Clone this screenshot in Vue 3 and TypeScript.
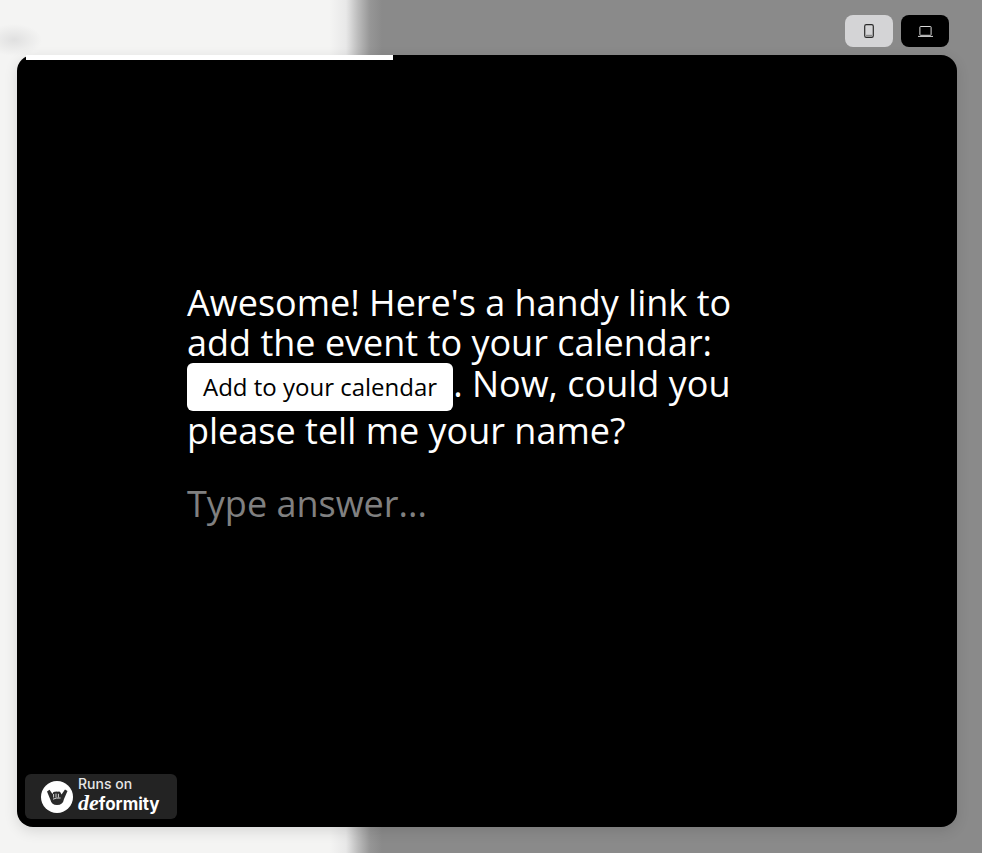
<template>
  <div class="page">
    <header class="toolbar">
      <button class="device device-light" aria-label="Mobile view">
        <svg width="10" height="14" viewBox="0 0 10 14" fill="none">
          <rect x="0.7" y="0.7" width="8.6" height="12.6" rx="1.6" stroke="#2a2a2a" stroke-width="1.2" />
          <path d="M2 10.8h6v1.6H2z" fill="#8a8a8a" />
        </svg>
      </button>
      <button class="device device-dark" aria-label="Desktop view">
        <svg width="15" height="11" viewBox="0 0 15 11" fill="none">
          <rect x="1.9" y="0.5" width="11.2" height="8.8" rx="0.6" stroke="#d8d8d8" stroke-width="1" />
          <path d="M0 10.4h15" stroke="#d8d8d8" stroke-width="1" />
        </svg>
      </button>
    </header>

    <main class="card">
      <div class="progress"></div>

      <div class="question">
        <p class="prompt">
          Awesome! Here's a handy link to add the event to your calendar:
          <a class="cta">Add to your calendar</a><span>. Now, could you please tell me your name?</span>
        </p>
        <p class="placeholder">Type answer...</p>
      </div>

      <a class="badge">
        <span class="badge-logo">
          <svg width="32" height="32" viewBox="0 0 32 32">
            <path d="M6 10.5 8.5 8.8 11.5 13Q12 10.5 14 10.8 15.5 10 17 10.8 18.5 10.2 19.5 11.5L20.5 13.5 24 8.5 26.5 10 23 18Q22 24 16 24 10.5 24 9.5 19Z" fill="#2b2b2b" />
            <path d="M12.6 16.5V13M15 16.5V12.6M17.4 16.5V12.8M12 18.2Q15 16.6 19.6 17" stroke="#fff" stroke-width="0.8" fill="none" />
          </svg>
        </span>
        <span class="badge-text">
          <span class="runs">Runs on</span>
          <span class="brand"><i>de</i>formity</span>
        </span>
      </a>
    </main>
  </div>
</template>

<script setup lang="ts">
</script>

<style>
html,
body {
  margin: 0;
}
</style>

<style scoped>
.page {
  width: 982px;
  height: 853px;
  box-sizing: border-box;
  padding: 15px 25px 26px 17px;
  display: flex;
  flex-direction: column;
  overflow: hidden;
  background:
    radial-gradient(ellipse 28px 16px at 14px 40px, #e0e0e0 0, rgba(224, 224, 224, 0) 100%),
    linear-gradient(90deg, #f4f4f3 0, #f4f4f3 330px, #e8e8e8 346px, #bcbcbc 358px, #969696 370px, #8a8a8a 382px, #8a8a8a 100%);
}

.toolbar {
  display: flex;
  justify-content: flex-end;
  gap: 8px;
  height: 40px;
  padding-right: 8px;
  box-sizing: border-box;
  padding-bottom: 8px;
}

.device {
  width: 48px;
  height: 32px;
  border: 0;
  padding: 0;
  border-radius: 8px;
  display: flex;
  align-items: center;
  justify-content: center;
}

.device-light {
  background: #d4d4d6;
}

.device-dark {
  background: #000;
}

.card {
  position: relative;
  flex: 1;
  background: #000;
  border-radius: 16px;
  display: flex;
  align-items: center;
  padding: 0 0 76px 170px;
  box-shadow: 0 4px 14px rgba(0, 0, 0, 0.12);
}

.progress {
  position: absolute;
  top: 0;
  left: 9px;
  width: 367px;
  height: 5px;
  background: #fff;
}

.question {
  width: 560px;
  font-family: "Open Sans", "Noto Sans", sans-serif;
  color: #fff;
}

.prompt {
  margin: 0;
  font-size: 36px;
  line-height: 40px;
}

.cta {
  display: inline-block;
  background: #fff;
  color: #000;
  font-size: 24px;
  line-height: 30px;
  padding: 9px 16px;
  border-radius: 6px;
  vertical-align: middle;
}

.placeholder {
  margin: 33px 0 0;
  font-size: 36px;
  line-height: 40px;
  color: #808080;
}

.badge {
  position: absolute;
  left: 8px;
  bottom: 8px;
  width: 152px;
  height: 45px;
  box-sizing: border-box;
  padding-left: 16px;
  display: flex;
  align-items: center;
  gap: 5px;
  background: #232323;
  border-radius: 6px;
  color: #fff;
  font-family: Inter, sans-serif;
}

.badge-logo {
  width: 32px;
  height: 32px;
  border-radius: 50%;
  background: #fff;
  display: flex;
  align-items: center;
  justify-content: center;
}

.badge-text {
  display: flex;
  flex-direction: column;
}

.runs {
  font-size: 14px;
  line-height: 16px;
  margin-top: -2px;
  font-weight: 500;
  color: #e6e6e6;
}

.brand {
  font-size: 17px;
  line-height: 21px;
  font-weight: 700;
}

.brand i {
  font-family: "Liberation Serif", serif;
  font-size: 22px;
}
</style>
